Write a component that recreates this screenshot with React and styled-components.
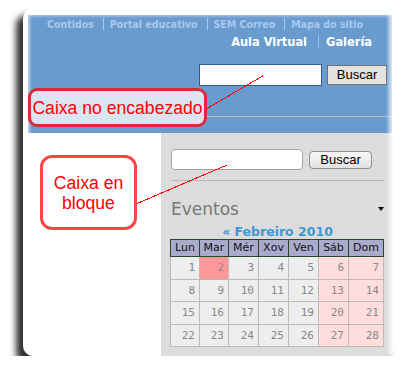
import React from 'react'
import styled, { createGlobalStyle } from 'styled-components'

const GlobalStyle = createGlobalStyle`
  body {
    margin: 0;
    background: #fff;
  }
`

const topLinks = ['Contidos', 'Portal educativo', 'SEM Correo', 'Mapa do sitio']
const mainLinks = ['Aula Virtual', 'Galería']
const days = ['Lun', 'Mar', 'Mér', 'Xov', 'Ven', 'Sáb', 'Dom']
const colWidths = [29, 29, 30, 30, 30, 30, 35]
const weeks = [0, 1, 2, 3].map(w => [1, 2, 3, 4, 5, 6, 7].map(d => w * 7 + d))

export default function App() {
  return (
    <>
      <GlobalStyle />
      <Stage>
        <Card>
          <Header>
            <TopNav>
              {topLinks.map(l => <NavItem key={l}>{l}</NavItem>)}
            </TopNav>
            <MainNav>
              {mainLinks.map(l => <MainItem key={l}>{l}</MainItem>)}
            </MainNav>
            <SearchRow>
              <HeaderInput />
              <HeaderButton>Buscar</HeaderButton>
            </SearchRow>
            <Rule />
          </Header>

          <Body>
            <LeftCol />
            <RightCol>
              <SearchRow $block>
                <BlockInput />
                <BlockButton>Buscar</BlockButton>
              </SearchRow>
              <Divider />
              <TitleRow>
                <Title>Eventos</Title>
                <Caret />
              </TitleRow>
              <Month>« Febreiro 2010</Month>
              <Calendar>
                <colgroup>
                  {colWidths.map((w, i) => <col key={i} style={{ width: w }} />)}
                </colgroup>
                <thead>
                  <tr>
                    {days.map(d => <Th key={d}>{d}</Th>)}
                  </tr>
                </thead>
                <tbody>
                  {weeks.map((week, wi) => (
                    <tr key={wi}>
                      {week.map((n, di) => (
                        <Td key={n} $weekend={di > 4} $today={n === 2}>{n}</Td>
                      ))}
                    </tr>
                  ))}
                </tbody>
              </Calendar>
            </RightCol>
          </Body>

          <EdgeFade />

          <Note $x={5} $y={80} $w={179} $h={39} $fill="#dbe4f3" $border="#dd2a3a" $radius={9}>
            Caixa no encabezado
          </Note>
          <Note $x={17} $y={147} $w={97} $h={75} $fill="#fff" $border="#ff4545" $radius={12}>
            Caixa en<br />bloque
          </Note>

          <Pointers width="372" height="348" viewBox="0 0 372 348">
            <line x1="184" y1="100.5" x2="240.5" y2="67.5" />
            <line x1="114" y1="195.5" x2="204" y2="157" />
          </Pointers>
        </Card>
      </Stage>
    </>
  )
}

const Stage = styled.div`
  padding: 8px 0 0 23px;
`

const Card = styled.div`
  position: relative;
  width: 372px;
  height: 348px;
  box-sizing: border-box;
  padding-top: 7px;
  border-radius: 10px;
  background: #fff;
  box-shadow: -7px 7px 6px rgba(0, 0, 0, 0.8);
  overflow: hidden;
  display: flex;
  flex-direction: column;
`

const Header = styled.div`
  margin: 0 3px 0 5px;
  height: 118px;
  box-sizing: border-box;
  padding-top: 3px;
  background: #6a9bcf;
  box-shadow: inset 3px 2px 3px -1px rgba(255, 255, 255, 0.55);
  display: flex;
  flex-direction: column;
`

const TopNav = styled.div`
  display: flex;
  padding-left: 19px;
  font-family: "DejaVu Sans Condensed", "DejaVu Sans", sans-serif;
  font-stretch: condensed;
  font-weight: bold;
  font-size: 10.5px;
  line-height: 12px;
  color: #a9c8ee;
`

const NavItem = styled.span`
  padding: 0 9px 0 6px;
  border-left: 1px solid #a9c8ee;
  &:first-child {
    padding-left: 0;
    border-left: none;
  }
`

const MainNav = styled.div`
  display: flex;
  justify-content: flex-end;
  margin-top: 5px;
  padding-right: 20px;
  font-family: "DejaVu Sans Condensed", "DejaVu Sans", sans-serif;
  font-stretch: condensed;
  font-weight: bold;
  font-size: 12.7px;
  line-height: 13px;
  color: #fff;
`

const MainItem = styled.span`
  & + & {
    margin-left: 11px;
    padding-left: 7px;
    border-left: 1px solid #9fc0e6;
  }
`

const SearchRow = styled.div`
  display: flex;
  align-items: center;
  justify-content: ${p => (p.$block ? 'flex-start' : 'flex-end')};
  margin-top: ${p => (p.$block ? 0 : 16)}px;
  padding-right: ${p => (p.$block ? 0 : 5)}px;
`

const HeaderInput = styled.div`
  width: 123px;
  height: 22px;
  box-sizing: border-box;
  border: 1px solid #2f5f8f;
  background: #fff;
`

const HeaderButton = styled.div`
  margin-left: 5px;
  width: 60px;
  height: 20px;
  box-sizing: border-box;
  border: 1px solid #707070;
  background: #e4e2de;
  font-family: "Liberation Sans", Arial, sans-serif;
  font-size: 13px;
  line-height: 18px;
  text-align: center;
  color: #000;
`

const Rule = styled.div`
  margin-top: 30px;
  height: 1px;
  background: #c4bfb2;
`

const Body = styled.div`
  flex: 1;
  margin: 0 3px 0 5px;
  display: grid;
  grid-template-columns: 133px 1fr;
`

const LeftCol = styled.div`
  background: #fff;
`

const RightCol = styled.div`
  background: #dcdcdc;
  padding: 16px 9px 0 10px;
`

const BlockInput = styled.div`
  width: 132px;
  height: 21px;
  box-sizing: border-box;
  border: 1px solid #a4a4a4;
  border-radius: 4px;
  background: #fff;
`

const BlockButton = styled.div`
  margin-left: 6px;
  width: 63px;
  height: 18px;
  box-sizing: border-box;
  border: 1px solid #8c8c8c;
  border-radius: 4px;
  background: linear-gradient(#f8f8f8, #e2e2e2);
  font-family: "Liberation Sans", Arial, sans-serif;
  font-size: 13px;
  line-height: 16px;
  text-align: center;
  color: #000;
`

const Divider = styled.div`
  margin-top: 10px;
  height: 1px;
  background: #b8b8b8;
`

const TitleRow = styled.div`
  margin-top: 18px;
  display: flex;
  justify-content: space-between;
  align-items: center;
`

const Title = styled.div`
  font-family: "DejaVu Sans", Verdana, sans-serif;
  font-size: 17px;
  line-height: 20px;
  color: #777;
`

const Caret = styled.div`
  width: 0;
  height: 0;
  border-left: 3.5px solid transparent;
  border-right: 3.5px solid transparent;
  border-top: 4px solid #000;
`

const Month = styled.div`
  margin-top: 5px;
  text-align: center;
  font-family: "DejaVu Sans", Verdana, sans-serif;
  font-weight: bold;
  font-size: 12.5px;
  line-height: 15px;
  color: #3c98d2;
`

const Calendar = styled.table`
  margin-left: -1px;
  width: 213px;
  table-layout: fixed;
  border-collapse: collapse;
`

const Th = styled.th`
  height: 16px;
  padding: 0;
  border: 1px solid #2a452a;
  background: #aaaacc;
  font-family: "DejaVu Sans", Verdana, sans-serif;
  font-weight: normal;
  font-size: 11px;
  line-height: 14px;
  color: #111;
  text-align: center;
`

const Td = styled.td`
  height: 21.5px;
  padding: 0 4px 0 0;
  border: 1px solid #bbb;
  background: ${p => (p.$today ? '#ff9999' : p.$weekend ? '#ffdddd' : '#eee')};
  font-family: "DejaVu Sans Mono", monospace;
  font-size: 11px;
  color: #888;
  text-align: right;
`

const EdgeFade = styled.div`
  position: absolute;
  top: 0;
  right: 0;
  bottom: 0;
  width: 9px;
  background: linear-gradient(to right, rgba(255, 255, 255, 0), #fff 85%);
`

const Note = styled.div`
  position: absolute;
  left: ${p => p.$x}px;
  top: ${p => p.$y}px;
  width: ${p => p.$w}px;
  height: ${p => p.$h}px;
  box-sizing: border-box;
  border: 3px solid ${p => p.$border};
  border-radius: ${p => p.$radius}px;
  background: ${p => p.$fill};
  display: flex;
  align-items: center;
  justify-content: center;
  text-align: center;
  font-family: "Liberation Sans", Arial, sans-serif;
  font-size: 17.6px;
  line-height: 20px;
  color: #f00;
  white-space: nowrap;
`

const Pointers = styled.svg`
  position: absolute;
  left: 0;
  top: 0;
  pointer-events: none;
  line {
    stroke: #f00;
    stroke-width: 1;
    shape-rendering: crispEdges;
  }
`
